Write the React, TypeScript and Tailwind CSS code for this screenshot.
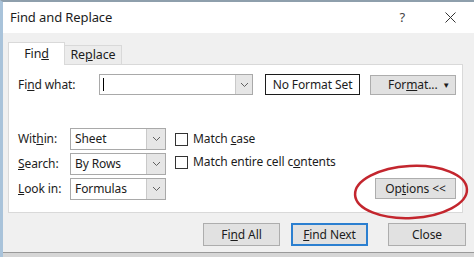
const Chevron = () => (
  <svg width="9" height="6" viewBox="0 0 9 6" fill="none">
    <path d="M1 1l3.5 3.5L8 1" stroke="#606060" strokeWidth="1" />
  </svg>
);

const Combo = ({ value }: { value: string }) => (
  <div className="flex h-[22px] w-[96px] border border-[#a9a9a9] bg-white">
    <div className="flex flex-1 items-center pl-[4px]">{value}</div>
    <div className="flex w-[19px] items-center justify-center border-l border-[#c9c9c9] bg-[#e6e6e6]">
      <Chevron />
    </div>
  </div>
);

const Check = ({ children }: { children: React.ReactNode }) => (
  <div className="flex items-center gap-[5px]">
    <div className="h-[13px] w-[13px] border border-[#333333] bg-white" />
    <span>{children}</span>
  </div>
);

export default function App() {
  return (
    <div className="relative flex h-[257px] w-[474px] flex-col overflow-hidden border-l-[3px] border-t-2 border-l-[#a9c3da] border-t-[#8e9fac] bg-[#f0f0f0] font-['Noto_Sans',sans-serif] text-[12px] tracking-[-0.1px] text-[#1c1c1c]">
      {/* title bar */}
      <div className="flex h-[31px] shrink-0 items-center bg-white pl-[7px] pr-[18px]">
        <span className="text-[13px]">Find and Replace</span>
        <span className="ml-auto mr-[40px] text-[13px] text-[#444]">?</span>
        <svg width="11" height="11" viewBox="0 0 11 11">
          <path d="M0.5 0.5l10 10M10.5 0.5l-10 10" stroke="#333" strokeWidth="1" />
        </svg>
      </div>

      {/* tabs */}
      <div className="mt-[9px] flex h-[22px] shrink-0 items-end pl-[5px]">
        <div className="relative z-10 -mb-px flex h-[23px] w-[57px] items-center justify-center border border-b-0 border-[#d9d9d9] bg-white text-[12.5px]">
          Fin<u>d</u>
        </div>
        <div className="flex h-[19px] w-[57px] items-center justify-center border border-b-0 border-l-0 border-[#d9d9d9] bg-[#ececec] text-[12.5px]">
          Re<u>p</u>lace
        </div>
      </div>

      {/* panel */}
      <div className="ml-[5px] mr-[11px] flex h-[149px] shrink-0 flex-col border border-[#d9d9d9] bg-white pl-[9px] pr-[6px] pt-[9px]">
        <div className="flex items-center">
          <span className="w-[81px]">
            Fi<u>n</u>d what:
          </span>
          <div className="flex h-[21px] w-[154px] border border-[#a9a9a9] bg-white">
            <div className="flex flex-1 items-center pl-[3px]">
              <div className="h-[13px] w-px bg-black" />
            </div>
            <div className="flex w-[17px] items-center justify-center border-l border-[#c9c9c9] bg-[#e6e6e6]">
              <Chevron />
            </div>
          </div>
          <div className="ml-[12px] flex h-[21px] w-[95px] items-center justify-center border border-[#1c1c1c]">
            No Format Set
          </div>
          <div className="ml-[10px] flex h-[20px] w-[86px] items-center border border-[#adadad] bg-[#e1e1e1] pl-[17px]">
            <span>
              For<u>m</u>at...
            </span>
            <span className="ml-auto mr-[5px] text-[8px]">▼</span>
          </div>
        </div>

        <div className="mt-[33px] flex">
          <div className="flex flex-col gap-[3px]">
            <div className="flex items-center">
              <span className="w-[52px]">
                Wit<u>h</u>in:
              </span>
              <Combo value="Sheet" />
            </div>
            <div className="flex items-center">
              <span className="w-[52px]">
                <u>S</u>earch:
              </span>
              <Combo value="By Rows" />
            </div>
            <div className="flex items-center">
              <span className="w-[52px]">
                <u>L</u>ook in:
              </span>
              <Combo value="Formulas" />
            </div>
          </div>

          <div className="ml-[9px] mt-[2px] flex flex-col gap-[5px]">
            <Check>
              Match <u>c</u>ase
            </Check>
            <Check>
              Match entire cell c<u>o</u>ntents
            </Check>
          </div>

          <div className="flex flex-1 items-end justify-end pb-[1px]">
            <div className="flex h-[21px] w-[81px] items-center justify-center border border-[#adadad] bg-[#e1e1e1]">
              Op<u>t</u>ions &lt;&lt;
            </div>
          </div>
        </div>
      </div>

      {/* bottom buttons */}
      <div className="mt-[10px] flex h-[23px] shrink-0 justify-end pr-[8px]">
        <div className="flex h-[23px] w-[77px] items-center justify-center border border-[#adadad] bg-[#e1e1e1]">
          Fi<u>n</u>d All
        </div>
        <div className="ml-[11px] flex h-[23px] w-[77px] items-center justify-center border-2 border-[#2b7fd0] bg-[#e1e1e1]">
          <span>
            <u>F</u>ind Next
          </span>
        </div>
        <div className="ml-[20px] flex h-[23px] w-[78px] items-center justify-center border border-[#adadad] bg-[#e1e1e1]">
          Close
        </div>
      </div>

      <div className="mt-auto h-[5px] shrink-0 border-t border-[#9a9a9a] bg-[#d6d6d6]" />

      {/* red annotation ring */}
      <svg
        className="absolute left-[348px] top-[160px]"
        width="120"
        height="60"
        viewBox="0 0 120 60"
        fill="none"
      >
        <ellipse
          cx="60"
          cy="30"
          rx="56"
          ry="26"
          transform="rotate(-3 60 30)"
          stroke="#c3262e"
          strokeWidth="2.5"
        />
      </svg>
    </div>
  );
}
